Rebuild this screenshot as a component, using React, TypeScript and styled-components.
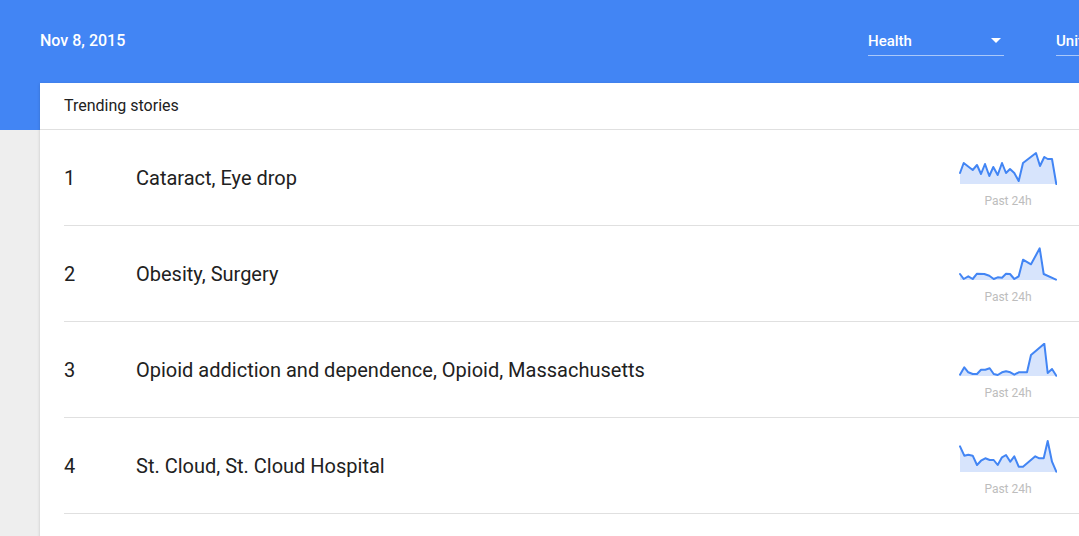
import styled, { createGlobalStyle } from "styled-components";

const GlobalStyle = createGlobalStyle`
    html, body {
        margin: 0;
        padding: 0;
        background: #eeeeee;
        overflow: hidden;
        font-family: Roboto, "Noto Sans", Arial, sans-serif;
    }
`

const Page = styled.div`
    width: 1079px;
    height: 536px;
    overflow: hidden;
`

const Header = styled.header`
    height: 130px;
    background: #4285f4;
    box-sizing: border-box;
    padding: 31px 0 0 40px;
    display: flex;
    align-items: flex-start;
    width: 1232px;
`

const DateLabel = styled.div`
    color: #ffffff;
    font-size: 16px;
    font-weight: 500;
    line-height: 20px;
`

const Selects = styled.div`
    margin-left: auto;
    display: flex;
    gap: 52px;
    padding-right: 40px;
`

const Select = styled.div`
    width: 136px;
    height: 25px;
    box-sizing: border-box;
    border-bottom: 1px solid rgba(255, 255, 255, 0.55);
    display: flex;
    align-items: flex-start;
    justify-content: space-between;
    color: #ffffff;
    font-size: 15px;
    line-height: 20px;
    font-weight: 500;
`

const Arrow = styled.span`
    width: 0;
    height: 0;
    margin: 7px 3px 0 0;
    border-left: 5px solid transparent;
    border-right: 5px solid transparent;
    border-top: 5px solid #ffffff;
`

const Card = styled.section`
    margin: -47px 0 0 40px;
    width: 1064px;
    background: #ffffff;
    box-shadow: 0 1px 3px rgba(0, 0, 0, 0.18);
    min-height: 500px;
`

const CardTitle = styled.div`
    height: 47px;
    box-sizing: border-box;
    padding: 0 24px 1px;
    display: flex;
    align-items: center;
    font-size: 16px;
    color: #212121;
    border-bottom: 1px solid #e0e0e0;
`

const List = styled.div`
    padding: 0 24px;
`

const Row = styled.div`
    height: 96px;
    box-sizing: border-box;
    border-bottom: 1px solid #e0e0e0;
    display: grid;
    grid-template-columns: 72px 1fr 98px;
    align-items: center;
    padding-right: 23px;
    color: #212121;
    font-size: 20px;
`

const Rank = styled.div``

const Title = styled.div``

const Spark = styled.div`
    display: flex;
    flex-direction: column;
    align-items: center;
    align-self: start;
    padding-top: 21px;
`

const Caption = styled.div`
    margin-top: 9px;
    font-size: 12px;
    color: #bdbdbd;
    line-height: 14px;
`

type Pt = [number, number];

const stories: { title: string; points: Pt[] }[] = [
    {
        title: "Cataract, Eye drop",
        points: [[1,22],[4.7,12],[13.7,19],[18,14],[22,23],[26,13],[30.3,25],[34.3,16],[38.7,24],[43,12],[47,22],[51,18],[55.3,22],[59.7,30],[64,12],[77,2],[81,15],[85.3,6],[88.7,8],[93,8],[97.3,33]],
    },
    {
        title: "Obesity, Surgery",
        points: [[1,27],[4.7,32],[9.3,29.3],[13.7,32],[18,26.7],[25.3,27],[30.3,28.7],[34.7,32],[38.7,30.3],[43,30.7],[47,26.7],[51,27],[55.3,32],[59.7,29.3],[64,12.7],[72,17.3],[80.7,1.3],[84.7,27],[97,32.7]],
    },
    {
        title: "Opioid addiction and dependence, Opioid, Massachusetts",
        points: [[1,31.7],[5.3,24.3],[9.3,29.3],[13.7,31],[18,31],[22,26.7],[26.3,26.7],[30.7,25.3],[34.7,31],[38.7,32],[43,29.3],[47,28.3],[51.3,29.3],[55.3,31.7],[59.7,29.3],[68,29.3],[72,12],[85.3,0.7],[88.7,30],[93,26],[97.3,32.7]],
    },
    {
        title: "St. Cloud, St. Cloud Hospital",
        points: [[1,7.3],[5.3,16.7],[9.3,15.7],[13.7,16.7],[18,26],[22,21.7],[26.3,19.3],[30.7,21],[34.7,21],[38.7,26],[43,18.3],[47,16],[51.3,22.7],[55.3,17.3],[59.7,27.7],[64,27.7],[76.3,17.3],[80.3,19.3],[84.7,19.3],[88.7,2],[93,22.7],[97.3,32.7]],
    },
];

function Sparkline({ points }: { points: Pt[] }) {
    const line = points.map(p => p.join(",")).join(" ");
    const first = points[0][0];
    const last = points[points.length - 1][0];
    const area = `${first},33 ${line} ${last},33`;
    return (
        <svg width="98" height="34" viewBox="0 0 98 34">
            <polygon points={area} fill="#d7e4fc" />
            <polyline points={line} fill="none" stroke="#4285f4" strokeWidth="2" strokeLinejoin="round" strokeLinecap="round" />
        </svg>
    );
}

export default function App() {
    return (
        <Page>
            <GlobalStyle />
            <Header>
                <DateLabel>Nov 8, 2015</DateLabel>
                <Selects>
                    <Select>Health<Arrow /></Select>
                    <Select>United States<Arrow /></Select>
                </Selects>
            </Header>
            <Card>
                <CardTitle>Trending stories</CardTitle>
                <List>
                    {stories.map((s, i) => (
                        <Row key={s.title}>
                            <Rank>{i + 1}</Rank>
                            <Title>{s.title}</Title>
                            <Spark>
                                <Sparkline points={s.points} />
                                <Caption>Past 24h</Caption>
                            </Spark>
                        </Row>
                    ))}
                </List>
            </Card>
        </Page>
    );
}
